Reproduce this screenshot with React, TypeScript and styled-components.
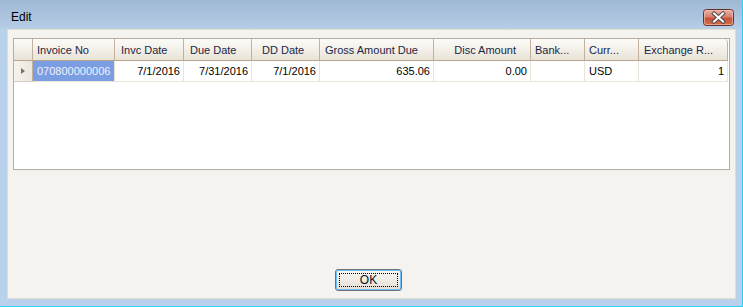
import React from 'react';
import styled, { createGlobalStyle } from 'styled-components';

const GlobalStyle = createGlobalStyle`
  html, body {
    margin: 0;
    padding: 0;
    background: #b9d1ea;
  }
  body {
    font-family: "Liberation Sans", Arial, sans-serif;
  }
`;

const Window = styled.div`
  box-sizing: border-box;
  width: 743px;
  height: 307px;
  display: flex;
  flex-direction: column;
  background: linear-gradient(to bottom, #9fb8d4 0px, #b4cbe4 26px, #b9d1ea 30px, #b9d1ea 100%);
  border-right: 1px solid #2ecff3;
  border-bottom: 1px solid #2ecff3;
`;

const TitleBar = styled.div`
  height: 29px;
  flex: none;
  display: flex;
  align-items: flex-start;
  justify-content: space-between;
  padding: 0 8px 0 11px;
`;

const Title = styled.span`
  margin-top: 9px;
  line-height: 16px;
  font-size: 12px;
  color: #000;
`;

const CloseButton = styled.button`
  margin-top: 9px;
  width: 31px;
  height: 17px;
  padding: 0;
  border: none;
  background: none;
  display: block;
`;

const Frame = styled.div`
  flex: 1;
  display: flex;
  padding: 0 6px 7px 7px;
`;

const Client = styled.div`
  flex: 1;
  display: flex;
  flex-direction: column;
  box-sizing: border-box;
  background: #f4f3ef;
  border: 1px solid #e4dccf;
  padding: 8px 5px 7px;
`;

const Grid = styled.div`
  box-sizing: border-box;
  height: 132px;
  border: 1px solid #b7ada3;
  background: #fff;
`;

const COLUMNS = '19px 82px 69px 68px 68px 114px 97px 54px 54px 89px';

const Row = styled.div`
  display: grid;
  grid-template-columns: ${COLUMNS};
`;

type Align = 'left' | 'right' | 'center';

const HeaderCell = styled.div<{ $align?: Align; $pad?: number; $corner?: 'left' | 'right' }>`
  box-sizing: border-box;
  height: 22px;
  display: flex;
  align-items: center;
  justify-content: ${p => (p.$align === 'right' ? 'flex-end' : p.$align === 'center' ? 'center' : 'flex-start')};
  padding: ${p => (p.$align === 'right' ? `0 ${p.$pad ?? 5}px 0 0` : `0 0 0 ${p.$pad ?? 5}px`)};
  background: linear-gradient(to bottom, #fcfbf8 0%, #f4f1ea 45%, #e9e3d7 100%);
  border-right: 1px solid #c3b19f;
  border-bottom: 1px solid #b9a690;
  border-top-left-radius: ${p => (p.$corner === 'left' ? '4px' : '0')};
  border-top-right-radius: ${p => (p.$corner === 'right' ? '4px' : '0')};
  font-size: 11px;
  color: #1c2646;
  white-space: nowrap;
  overflow: hidden;
`;

const DataCell = styled.div<{ $align?: Align; $selected?: boolean }>`
  box-sizing: border-box;
  height: 21px;
  display: flex;
  align-items: center;
  justify-content: ${p => (p.$align === 'right' ? 'flex-end' : 'flex-start')};
  padding: 0 3px 0 4px;
  background: ${p => (p.$selected ? '#7b9de2' : '#fff')};
  border-right: 1px solid #e9e3da;
  border-bottom: 1px solid #e9e3da;
  font-size: 11px;
  color: ${p => (p.$selected ? '#eef2ff' : '#000')};
  white-space: nowrap;
  overflow: hidden;
`;

const RowHeaderCell = styled.div`
  box-sizing: border-box;
  height: 21px;
  display: flex;
  align-items: center;
  padding-left: 7px;
  background: linear-gradient(to right, #f6f3ee, #ece6dc);
  border-right: 1px solid #c3b19f;
  border-bottom: 1px solid #d8cfc2;
`;

const Pointer = styled.span`
  width: 0;
  height: 0;
  border-top: 3.5px solid transparent;
  border-bottom: 3.5px solid transparent;
  border-left: 4px solid #7d7064;
`;

const Spacer = styled.div`
  flex: 1;
`;

const ButtonRow = styled.div`
  display: flex;
  justify-content: center;
  padding-right: 6px;
`;

const OkButton = styled.button`
  position: relative;
  box-sizing: border-box;
  width: 67px;
  height: 22px;
  padding: 0;
  border: 1px solid #6f7378;
  border-radius: 3px;
  background: linear-gradient(to bottom, #f8f7f3 0%, #efece5 50%, #e4dfd4 100%);
  box-shadow: inset 0 0 0 1px #6dbff5;
  font-family: "Liberation Sans", Arial, sans-serif;
  font-size: 12px;
  color: #0b1020;
  cursor: default;

  &::after {
    content: '';
    position: absolute;
    inset: 3px;
    border: 1px dotted #000;
  }
`;

const headers: { label: string; align?: Align; pad?: number }[] = [
  { label: 'Invoice No', pad: 4 },
  { label: 'Invc Date', pad: 6 },
  { label: 'Due Date', pad: 6 },
  { label: 'DD Date', pad: 10 },
  { label: 'Gross Amount Due', pad: 5 },
  { label: 'Disc Amount', align: 'right', pad: 14 },
  { label: 'Bank...', pad: 4 },
  { label: 'Curr...', pad: 4 },
  { label: 'Exchange R...', pad: 5 },
];

const row: { value: string; align?: Align; selected?: boolean }[] = [
  { value: '070800000006', selected: true },
  { value: '7/1/2016', align: 'right' },
  { value: '7/31/2016', align: 'right' },
  { value: '7/1/2016', align: 'right' },
  { value: '635.06', align: 'right' },
  { value: '0.00', align: 'right' },
  { value: '' },
  { value: 'USD' },
  { value: '1', align: 'right' },
];

function CloseGlyph() {
  return (
    <svg width="31" height="17" viewBox="0 0 31 17">
      <defs>
        <linearGradient id="closeBg" x1="0" y1="0" x2="0" y2="1">
          <stop offset="0" stopColor="#eab3a8" />
          <stop offset="0.45" stopColor="#d9836f" />
          <stop offset="0.55" stopColor="#c85238" />
          <stop offset="1" stopColor="#d2704f" />
        </linearGradient>
      </defs>
      <rect x="0.5" y="0.5" width="30" height="16" rx="3" fill="url(#closeBg)" stroke="#6b2f2a" />
      <rect x="1.5" y="1.5" width="28" height="14" rx="2" fill="none" stroke="#f3c9bf" strokeOpacity="0.6" />
      <path d="M11 4.5 L20 12.5 M20 4.5 L11 12.5" stroke="#4e4a4a" strokeWidth="4" strokeLinecap="square" />
      <path d="M11 4.5 L20 12.5 M20 4.5 L11 12.5" stroke="#ffffff" strokeWidth="2" strokeLinecap="square" />
    </svg>
  );
}

export default function App() {
  return (
    <>
      <GlobalStyle />
      <Window>
        <TitleBar>
          <Title>Edit</Title>
          <CloseButton aria-label="Close">
            <CloseGlyph />
          </CloseButton>
        </TitleBar>
        <Frame>
          <Client>
            <Grid>
              <Row>
                <HeaderCell $corner="left" />
                {headers.map((h, i) => (
                  <HeaderCell
                    key={h.label}
                    $align={h.align}
                    $pad={h.pad}
                    $corner={i === headers.length - 1 ? 'right' : undefined}
                  >
                    {h.label}
                  </HeaderCell>
                ))}
              </Row>
              <Row>
                <RowHeaderCell>
                  <Pointer />
                </RowHeaderCell>
                {row.map((c, i) => (
                  <DataCell key={i} $align={c.align} $selected={c.selected}>
                    {c.value}
                  </DataCell>
                ))}
              </Row>
            </Grid>
            <Spacer />
            <ButtonRow>
              <OkButton>OK</OkButton>
            </ButtonRow>
          </Client>
        </Frame>
      </Window>
    </>
  );
}
